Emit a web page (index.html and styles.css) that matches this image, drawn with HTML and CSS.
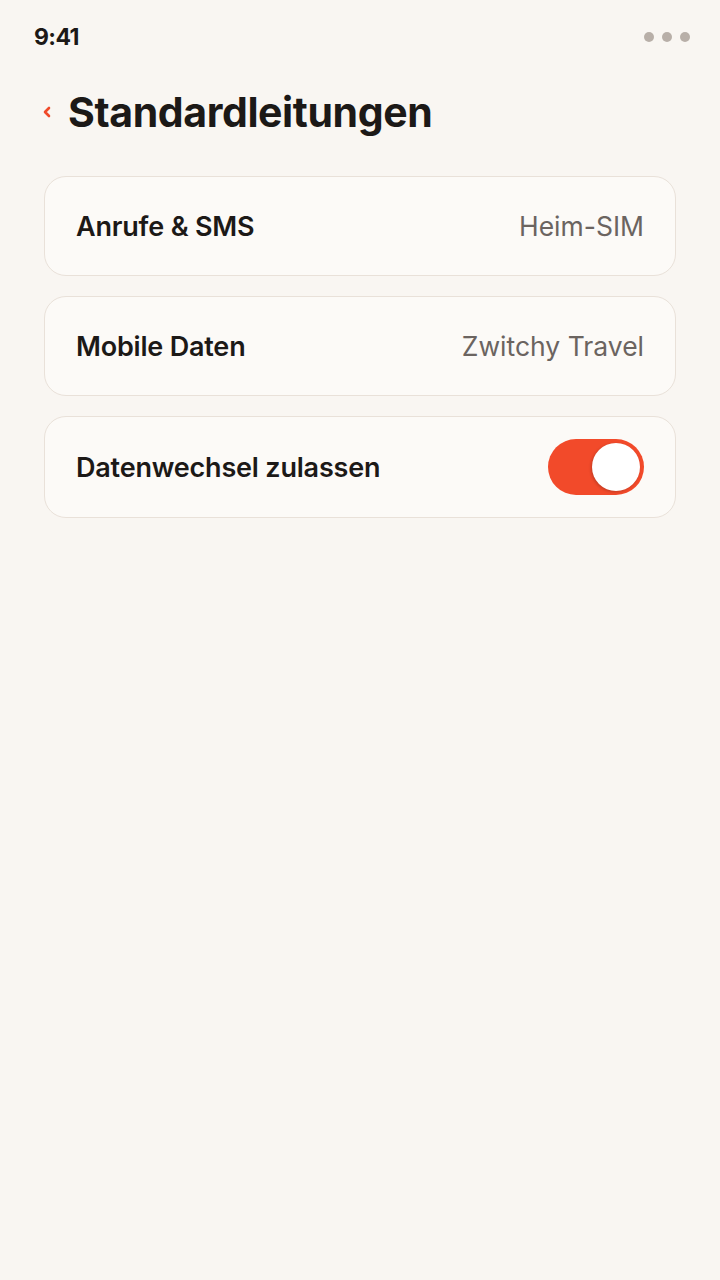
FILE: index.html
```html
<!DOCTYPE html>
<html lang="de">

<head>
  <meta charset="UTF-8">
  <meta name="viewport" content="width=device-width, initial-scale=1.0">
  <title>Standardleitungen</title>
  <link rel="stylesheet" href="styles.css">
</head>

<body>
  <div class="status">
    <span class="time">9:41</span>
    <span class="dots"><i></i><i></i><i></i></span>
  </div>

  <div class="header">
    <svg class="back" width="10" height="14" viewBox="0 0 10 14">
      <path d="M7 3 L3 7 L7 11" fill="none" stroke="#f04a2a" stroke-width="2.6" stroke-linecap="round" stroke-linejoin="round"/>
    </svg>
    <h1>Standardleitungen</h1>
  </div>

  <ul class="list">
    <li class="card">
      <span class="label">Anrufe &amp; SMS</span>
      <span class="value">Heim-SIM</span>
    </li>
    <li class="card">
      <span class="label">Mobile Daten</span>
      <span class="value">Zwitchy Travel</span>
    </li>
    <li class="card card-toggle">
      <span class="label">Datenwechsel zulassen</span>
      <span class="toggle on"><span class="knob"></span></span>
    </li>
  </ul>
</body>

</html>
```

FILE: styles.css
```css
body {
  margin: 0;
  background: #f9f6f2;
  font-family: "Inter", "Noto Sans", sans-serif;
  color: #1c1917;
}
.status {
  display: flex;
  justify-content: space-between;
  align-items: center;
  height: 74px;
  padding: 0 30px 0 34px;
}
.time {
  font-size: 23px;
  font-weight: 700;
  letter-spacing: -0.6px;
}
.dots {
  display: flex;
  gap: 8px;
}
.dots i {
  width: 10px;
  height: 10px;
  border-radius: 50%;
  background: #b8afa8;
}
.header {
  display: flex;
  align-items: center;
  gap: 16px;
  padding: 0 44px 0 42px;
  height: 76px;
}
.back {
  display: block;
}
h1 {
  margin: 0;
  font-size: 41px;
  font-weight: 700;
  letter-spacing: -0.4px;
}
.list {
  margin: 26px 44px 0;
  padding: 0;
  list-style: none;
  display: flex;
  flex-direction: column;
  gap: 20px;
}
.card {
  display: flex;
  justify-content: space-between;
  align-items: center;
  height: 98px;
  padding: 0 31px;
  background: #fcfaf7;
  border: 1px solid #e9e1d9;
  border-radius: 22px;
}
.card-toggle {
  height: 100px;
}
.label {
  font-size: 27px;
  font-weight: 600;
  letter-spacing: -0.2px;
}
.value {
  font-size: 26.5px;
  color: #6b6460;
}
.toggle {
  display: flex;
  align-items: center;
  width: 96px;
  height: 56px;
  padding: 4px;
  box-sizing: border-box;
  border-radius: 28px;
  background: #f24a2a;
}
.toggle.on {
  justify-content: flex-end;
}
.knob {
  width: 48px;
  height: 48px;
  border-radius: 50%;
  background: #fff;
  box-shadow: -1px 1px 3px rgba(0, 0, 0, 0.2);
}
```
